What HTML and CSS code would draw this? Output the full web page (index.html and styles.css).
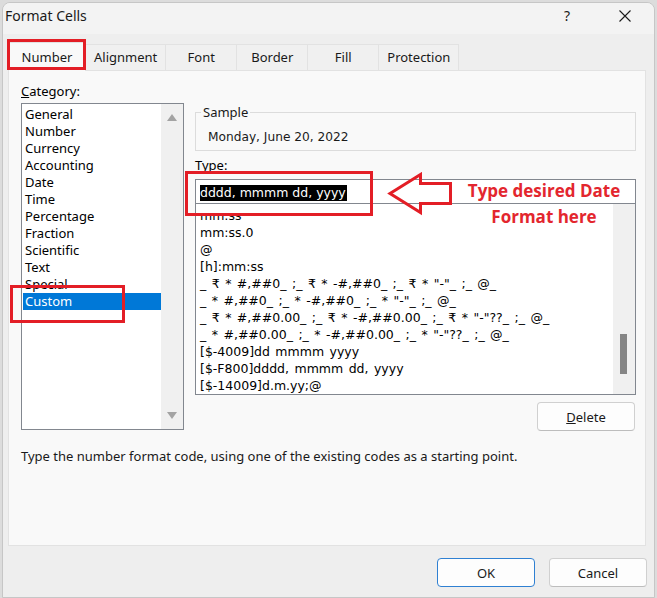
FILE: index.html
```html
<!DOCTYPE html>
<html>
<head>
<meta charset="utf-8">
<title>Format Cells</title>
<link rel="stylesheet" href="styles.css">
</head>
<body>
<div class="window">
  <div class="titlebar">
    <span class="title">Format Cells</span>
    <span class="help">?</span>
    <span class="close"><svg width="12" height="12" viewBox="0 0 12 12"><path d="M0.5 0.5L11.5 11.5M11.5 0.5L0.5 11.5" stroke="#1c1c1c" stroke-width="1.1" fill="none"/></svg></span>
  </div>
  <div class="tabs">
    <div class="tab active">Number</div>
    <div class="tab">Alignment</div>
    <div class="tab">Font</div>
    <div class="tab">Border</div>
    <div class="tab">Fill</div>
    <div class="tab">Protection</div>
  </div>
  <div class="redbox tabbox"></div>
  <div class="panel">
    <div class="cols">
      <div class="left">
        <div class="label"><u>C</u>ategory:</div>
        <div class="listbox">
          <div class="items">
            <div class="item">General</div>
            <div class="item">Number</div>
            <div class="item">Currency</div>
            <div class="item">Accounting</div>
            <div class="item">Date</div>
            <div class="item">Time</div>
            <div class="item">Percentage</div>
            <div class="item">Fraction</div>
            <div class="item">Scientific</div>
            <div class="item">Text</div>
            <div class="item">Special</div>
            <div class="item sel">Custom</div>
          </div>
          <div class="vscroll arrows">
            <span class="arr up"></span>
            <span class="arr down"></span>
          </div>
        </div>
      </div>
      <div class="right">
        <fieldset class="sample">
          <legend>Sample</legend>
          <div class="sample-text">Monday, June 20, 2022</div>
        </fieldset>
        <div class="label type-label"><u>T</u>ype:</div>
        <div class="type-input"><span class="hl">dddd, mmmm dd, yyyy</span></div>
        <div class="typelist">
          <div class="items">
            <div class="item">mm:ss</div>
            <div class="item">mm:ss.0</div>
            <div class="item">@</div>
            <div class="item">[h]:mm:ss</div>
            <div class="item">_ ₹ * #,##0_ ;_ ₹ * -#,##0_ ;_ ₹ * "-"_ ;_ @_</div>
            <div class="item">_ * #,##0_ ;_ * -#,##0_ ;_ * "-"_ ;_ @_</div>
            <div class="item">_ ₹ * #,##0.00_ ;_ ₹ * -#,##0.00_ ;_ ₹ * "-"??_ ;_ @_</div>
            <div class="item">_ * #,##0.00_ ;_ * -#,##0.00_ ;_ * "-"??_ ;_ @_</div>
            <div class="item">[$-4009]dd mmmm yyyy</div>
            <div class="item">[$-F800]dddd, mmmm dd, yyyy</div>
            <div class="item">[$-14009]d.m.yy;@</div>
          </div>
          <div class="vscroll">
            <div class="thumb"></div>
          </div>
        </div>
        <div class="delete-row"><button class="btn"><u>D</u>elete</button></div>
      </div>
    </div>
    <p class="desc">Type the number format code, using one of the existing codes as a starting point.</p>

    <div class="redbox custombox"></div>
    <div class="redbox typebox"></div>
    <svg class="arrow" width="66" height="44" viewBox="0 0 66 44">
      <path d="M3 21.5L33.5 2.5V11.5H63.5V31.5H33.5V40.5Z" fill="none" stroke="#e31e26" stroke-width="3" stroke-linejoin="miter"/>
    </svg>
    <div class="note">Type desired Date<br>Format here</div>
  </div>
  <div class="footer">
    <button class="btn ok">OK</button>
    <button class="btn">Cancel</button>
  </div>
</div>
</body>
</html>
```

FILE: styles.css
```css
* { box-sizing: border-box; }

html, body {
  margin: 0;
  padding: 0;
}

body {
  background: #dcdcdc;
  font-family: "Noto Sans", "Open Sans", sans-serif;
  font-size: 13px;
  color: #000;
  width: 657px;
  height: 598px;
  overflow: hidden;
}

.window {
  position: relative;
  margin: 2px 0 0 2px;
  width: 653px;
  height: 596px;
  background: #eeeeee;
  border: 1px solid #c6c6c6;
  border-radius: 8px 8px 0 0;
  overflow: hidden;
}

.titlebar {
  height: 31px;
  padding: 2px 0 0 2px;
  display: flex;
  align-items: flex-start;
  background: #f3f3f3;
  line-height: 22px;
}

.title {
  font-size: 14px;
  color: #1a1a1a;
  flex: 1;
}

.help {
  font-size: 14px;
  color: #1a1a1a;
  width: 14px;
  margin-right: 41px;
}

.close {
  width: 12px;
  height: 22px;
  margin-right: 23px;
  display: flex;
  align-items: center;
}

.tabs {
  display: flex;
  align-items: flex-end;
  height: 28px;
  margin: 8px 0 0 5px;
}

.tab {
  height: 26px;
  min-width: 72px;
  padding: 0 8px;
  line-height: 25px;
  text-align: center;
  background: #f0f0f0;
  border: 1px solid #e2e2e2;
  border-bottom: none;
  margin-left: -1px;
  color: #1a1a1a;
}

.tab.active {
  height: 29px;
  min-width: 78px;
  background: #f9f9f9;
  margin-left: 0;
  margin-bottom: -1px;
  position: relative;
  z-index: 1;
  line-height: 29px;
}

.panel {
  position: relative;
  margin-left: 5px;
  width: 638px;
  height: 476px;
  background: #f9f9f9;
  border: 1px solid #e2e2e2;
  padding: 12px 9px 0 12px;
}

.cols {
  display: flex;
  gap: 11px;
}

.left {
  width: 163px;
  flex: none;
}

.right {
  width: 441px;
  flex: none;
}

.label {
  line-height: 17px;
  height: 17px;
}

.listbox {
  margin-top: 3px;
  height: 327px;
  border: 1px solid #82878f;
  background: #fff;
  display: flex;
}

.items {
  flex: 1;
  padding: 2px 0 0 1px;
  overflow: hidden;
}

.item {
  height: 17px;
  line-height: 17px;
  padding-left: 2px;
  white-space: nowrap;
}

.item.sel {
  background: #0078d7;
  color: #fff;
}

.vscroll {
  width: 22px;
  flex: none;
  background: #f0f0f0;
  position: relative;
}

.arrows {
  display: flex;
  flex-direction: column;
  justify-content: space-between;
  align-items: center;
  padding: 10px 0 10px;
}

.arr {
  width: 0;
  height: 0;
  border-left: 5px solid transparent;
  border-right: 5px solid transparent;
}

.arr.up { border-bottom: 7px solid #a3a3a3; }
.arr.down { border-top: 7px solid #a3a3a3; }

.sample {
  margin: 21px 0 0 0;
  padding: 8px 10px 4px 5px;
  border: 1px solid #dcdcdc;
  min-width: 0;
}

.sample legend {
  padding: 0 2px;
  line-height: 17px;
  color: #1a1a1a;
}

.sample-text {
  line-height: 17px;
  padding-left: 7px;
  font-family: "DejaVu Sans", sans-serif;
  font-size: 12.2px;
  color: #1a1a1a;
}

.type-label {
  margin-top: 6px;
}

.type-input {
  margin-top: 5px;
  height: 25px;
  border: 1px solid #82878f;
  background: #fff;
  padding: 3px 0 0 4px;
}

.hl {
  display: inline-block;
  background: #000;
  color: #fff;
  font-family: "DejaVu Sans", sans-serif;
  font-size: 12.5px;
  line-height: 16px;
  height: 16px;
  padding-right: 1px;
}

.typelist {
  margin-top: -1px;
  height: 192px;
  border: 1px solid #82878f;
  background: #fff;
  display: flex;
}

.typelist .items {
  padding: 3px 0 0 3px;
}

.typelist .item {
  padding-left: 1px;
  font-family: "DejaVu Sans", sans-serif;
  font-size: 12.5px;
  word-spacing: 1.5px;
}

.thumb {
  position: absolute;
  left: 7px;
  top: 130px;
  width: 7px;
  height: 40px;
  background: #858585;
}

.delete-row {
  display: flex;
  justify-content: flex-end;
  margin-top: 7px;
  padding-right: 1px;
}

.btn {
  font-family: "Noto Sans", "Open Sans", sans-serif;
  font-size: 13px;
  color: #1a1a1a;
  width: 98px;
  height: 29px;
  background: #fdfdfd;
  border: 1px solid #d0d0d0;
  border-bottom-color: #bdbdbd;
  border-radius: 4px;
  padding: 0;
}

.desc {
  margin: 17px 0 0 0;
  line-height: 17px;
  color: #1a1a1a;
}

.footer {
  display: flex;
  justify-content: flex-end;
  gap: 14px;
  margin-top: 12px;
  padding-right: 7px;
}

.btn.ok {
  border-color: #2f80d2;
}

.redbox {
  position: absolute;
  border: 3px solid #e31e26;
}

.tabbox {
  left: 4px;
  top: 36px;
  width: 79px;
  height: 31px;
  z-index: 2;
}

.custombox {
  left: 1px;
  top: 214px;
  width: 115px;
  height: 38px;
}

.typebox {
  left: 176px;
  top: 100px;
  width: 188px;
  height: 45px;
}

.arrow {
  position: absolute;
  left: 378px;
  top: 101px;
}

.note {
  position: absolute;
  left: 450px;
  top: 107px;
  width: 170px;
  text-align: center;
  font-family: "Open Sans", sans-serif;
  font-weight: 700;
  font-size: 17px;
  line-height: 25.5px;
  color: #e3262e;
}
```
